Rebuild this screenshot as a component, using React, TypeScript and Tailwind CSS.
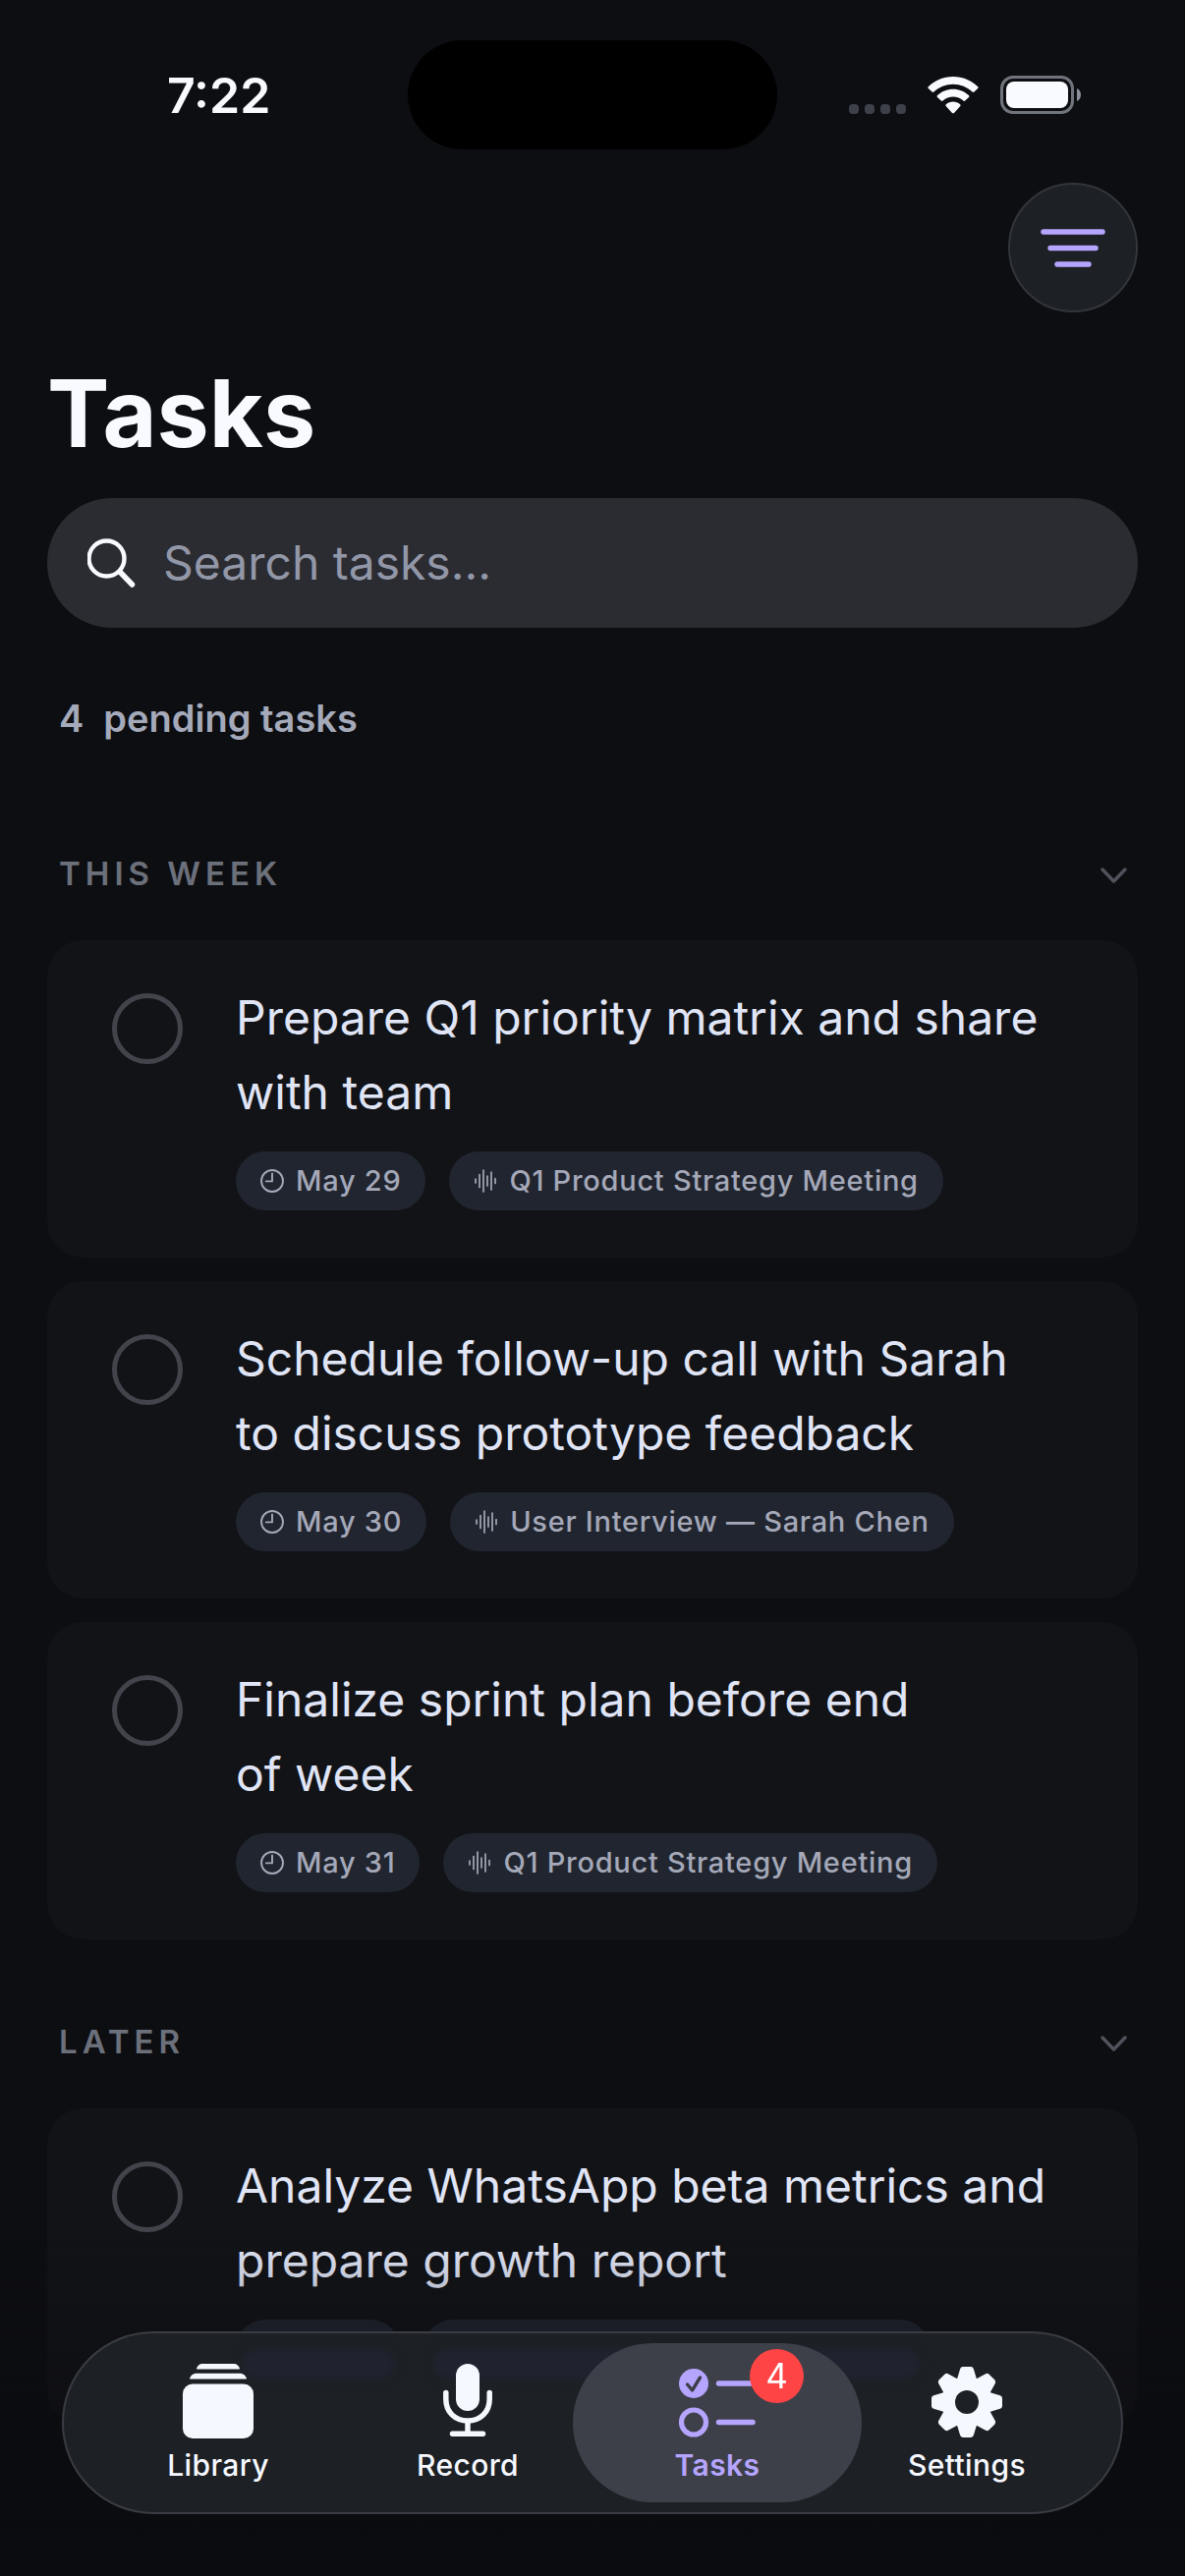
import { useState } from "react";

type Task = {
    id: number;
    title: string;
    due?: string;
    source?: string;
};

type Group = { label: string; tasks: Task[] };

const groups: Group[] = [
    {
        label: "This week",
        tasks: [
            { id: 1, title: "Prepare Q1 priority matrix and share\nwith team", due: "May 29", source: "Q1 Product Strategy Meeting" },
            { id: 2, title: "Schedule follow-up call with Sarah\nto discuss prototype feedback", due: "May 30", source: "User Interview — Sarah Chen" },
            { id: 3, title: "Finalize sprint plan before end\nof week", due: "May 31", source: "Q1 Product Strategy Meeting" },
        ],
    },
    {
        label: "Later",
        tasks: [{ id: 4, title: "Analyze WhatsApp beta metrics and\nprepare growth report" }],
    },
];

const WifiIcon = () => (
    <svg width="52" height="38" viewBox="0 0 52 38" fill="#f9faff">
        <path d="M26 0C35.800 0 44.800 3.800 51.200 10.200C51.800 10.800 51.800 11.500 51.200 12.100L47.400 15.600C46.800 16.200 46.200 16.100 45.600 15.600C40.300 10.500 33.400 7.700 26 7.700C18.600 7.700 11.700 10.500 6.400 15.600C5.800 16.100 5.200 16.200 4.600 15.600L0.800 12.100C0.200 11.500 0.200 10.800 0.800 10.200C7.200 3.800 16.200 0 26 0Z" />
        <path d="M26 12.700C32.100 12.700 37.800 15 42 19C42.600 19.600 42.600 20.300 42 20.900L38.200 24.600C37.700 25.100 37 25.100 36.400 24.600C33.600 22 29.900 20.600 26 20.600C22.100 20.600 18.400 22 15.600 24.600C15 25.100 14.300 25.100 13.800 24.600L10 20.900C9.400 20.300 9.400 19.600 10 19C14.200 15 19.900 12.700 26 12.700Z" />
        <path d="M26 25.600C28.800 25.600 31.200 26.500 33.200 28.200C33.800 28.700 33.800 29.400 33.300 30L27 36.900C26.400 37.500 25.600 37.500 25 36.900L18.700 30C18.200 29.400 18.200 28.700 18.800 28.200C20.800 26.500 23.200 25.600 26 25.600Z" />
    </svg>
);

const BatteryIcon = () => (
    <svg width="82" height="39" viewBox="0 0 82 39">
        <rect x="1.500" y="1.500" width="72" height="36" rx="11.500" fill="none" stroke="#70747d" strokeWidth="3" />
        <rect x="6" y="6" width="63" height="27" rx="8" fill="#f9faff" />
        <path d="M78 13C80.500 14.200 82 16.600 82 19.500S80.500 24.800 78 26Z" fill="#8d919b" />
    </svg>
);

const StatusBar = () => (
    <div className="grid grid-cols-[1fr_376px_1fr] items-center pt-[41px]">
        <span className="pl-[170px] text-[50px] leading-[60px] font-semibold text-[#f9faff]">7:22</span>
        <div className="h-[111px] rounded-full bg-black" />
        <div className="flex items-center justify-end gap-[22px] pr-[106px]">
            <div className="flex gap-[6px] self-end">
                {[0, 1, 2, 3].map((i) => (
                    <span key={i} className="size-[10px] rounded-[4px] bg-[#3f414a]" />
                ))}
            </div>
            <WifiIcon />
            <BatteryIcon />
        </div>
    </div>
);

const ClockIcon = () => (
    <svg width="24" height="24" viewBox="0 0 24 24" fill="none" stroke="currentColor" strokeWidth="1.900" strokeLinecap="round">
        <circle cx="12" cy="12" r="11" />
        <path d="M12 4.500V12.400H5.800" strokeLinejoin="round" />
    </svg>
);

const WaveIcon = () => (
    <svg width="24" height="24" viewBox="0 0 24 24" stroke="currentColor" strokeWidth="1.700" strokeLinecap="round">
        <path d="M2 10V14M6 5.500V18.500M10 1V23M14 7V17M18 3V21M22 9.500V14.500" />
    </svg>
);

const Chip = ({ icon, children }: { icon: React.ReactNode; children: React.ReactNode }) => (
    <span className="flex h-[60px] items-center gap-3 rounded-full bg-[#21252f] px-[25px] text-[29px] font-medium tracking-wide text-[#a4a8b8]">
        {icon}
        {children}
    </span>
);

const TaskCard = ({ task }: { task: Task }) => {
    const [done, setDone] = useState(false);
    return (
        <li className="flex items-start gap-[54px] rounded-[36px] bg-[#121317] pt-[41px] pr-10 pb-12 pl-[66px]">
            <input
                id={`task-${task.id}`}
                type="checkbox"
                checked={done}
                onChange={(e) => setDone(e.target.checked)}
                className="mt-[13px] size-[72px] shrink-0 cursor-pointer appearance-none rounded-full border-[5px] border-[#42444c] checked:bg-[#b5a5ff]"
            />
            <div className="min-w-0">
                <label htmlFor={`task-${task.id}`} className="block whitespace-pre-line text-[48px] leading-[76px] text-[#e0e5f6]">
                    {task.title}
                </label>
                <div className="mt-[22px] flex gap-6">
                    {task.due ? (
                        <Chip icon={<ClockIcon />}>{task.due}</Chip>
                    ) : (
                        <span className="h-[60px] w-[167px] rounded-full bg-[#21252f]" />
                    )}
                    {task.source ? (
                        <Chip icon={<WaveIcon />}>{task.source}</Chip>
                    ) : (
                        <span className="h-[60px] w-[515px] rounded-full bg-[#21252f]" />
                    )}
                </div>
            </div>
        </li>
    );
};

const TaskGroup = ({ group, className }: { group: Group; className: string }) => {
    const [open, setOpen] = useState(true);
    return (
        <section className={className}>
            <h2>
                <button
                    type="button"
                    aria-expanded={open}
                    onClick={() => setOpen(!open)}
                    className="flex w-full items-center justify-between pr-[11px] pl-3 text-[33px] leading-[48px] font-semibold tracking-[5px] text-[#6c707b] uppercase"
                >
                    {group.label}
                    <svg width="27" height="16" viewBox="0 0 27 16" className="mt-1" fill="none" stroke="#50535c" strokeWidth="3.400" strokeLinecap="round" strokeLinejoin="round">
                        <path d="M2 2L13.500 14L25 2" />
                    </svg>
                </button>
            </h2>
            {open && (
                <ul className="mt-11 flex flex-col gap-6">
                    {group.tasks.map((task) => (
                        <TaskCard key={task.id} task={task} />
                    ))}
                </ul>
            )}
        </section>
    );
};

const LibraryIcon = () => (
    <svg width="72" height="76" viewBox="0 0 72 76" fill="currentColor">
        <path d="M14 5.500C14.500 2 17 0 20.500 0H51.500C55 0 57.500 2 58 5.500Z" />
        <path d="M7 15.500C7.500 12 10.500 9.700 14 9.700H58C61.500 9.700 64.500 12 65 15.500Z" />
        <rect y="20.500" width="72" height="55.500" rx="10" />
    </svg>
);

const RecordIcon = () => (
    <svg width="72" height="76" viewBox="0 0 72 76" fill="none" stroke="currentColor" strokeWidth="5.500" strokeLinecap="round">
        <rect x="24" y="0" width="24" height="48" rx="12" fill="currentColor" stroke="none" />
        <path d="M13.800 29.500V36C13.800 49 23 58 36 58S58.200 49 58.200 36V29.500M36 58V71M20.500 71.200H51.500" />
    </svg>
);

const TasksIcon = () => (
    <svg width="78" height="76" viewBox="0 0 78 76" fill="none" stroke="currentColor">
        <circle cx="15" cy="20" r="15" fill="currentColor" stroke="none" />
        <path d="M8.500 21L13.500 27L21.500 14" stroke="#3e4049" strokeWidth="3.400" strokeLinecap="round" strokeLinejoin="round" />
        <path d="M40.500 20H75M40.500 59.500H75" strokeWidth="5.500" strokeLinecap="round" />
        <circle cx="15" cy="59.500" r="12.500" strokeWidth="5.200" />
    </svg>
);

const SettingsIcon = () => (
    <svg width="72" height="76" viewBox="0 0 72 76" fill="currentColor" stroke="currentColor">
        <mask id="gear-hole" maskUnits="userSpaceOnUse" x="-40" y="-40" width="80" height="80">
            <rect x="-40" y="-40" width="80" height="80" fill="white" stroke="none" />
            <circle r="12" fill="black" stroke="none" />
        </mask>
        <g transform="translate(36 39)" mask="url(#gear-hole)">
            {[0, 45, 90, 135].map((a) => (
                <path key={a} transform={`rotate(${a})`} d="M-4 -33H4L7 -23V23L4 33H-4L-7 23V-23Z" strokeWidth="6" strokeLinejoin="round" />
            ))}
            <circle r="26" stroke="none" />
        </g>
    </svg>
);

const tabs = [
    { name: "Library", icon: <LibraryIcon /> },
    { name: "Record", icon: <RecordIcon /> },
    { name: "Tasks", icon: <TasksIcon />, badge: 4 },
    { name: "Settings", icon: <SettingsIcon /> },
];

const TabBar = ({ current }: { current: string }) => (
    <nav className="fixed inset-x-[63px] bottom-[63px] rounded-full border-2 border-[#3a3c44] bg-[#1d2024] px-[30px] py-[10px]">
        {/* content glow seen through the glass */}
        <div className="absolute top-4 left-[182px] h-[30px] w-[155px] rounded-full bg-[#20232f] blur-xs" />
        <div className="absolute top-4 left-[376px] h-[30px] w-[495px] rounded-full bg-[#20232f] blur-xs" />
        <div className="relative grid grid-cols-4">
            {tabs.map((tab) => (
                <button
                    key={tab.name}
                    type="button"
                    aria-current={tab.name === current ? "page" : undefined}
                    className={
                        tab.name === current
                            ? "relative -mx-5 flex h-[162px] flex-col items-center rounded-full bg-[#3e4049] pt-[21px] font-semibold tracking-wide text-[#b5a5ff]"
                            : "relative flex h-[162px] flex-col items-center pt-[21px] font-medium tracking-wide text-[#f6f8ff]"
                    }
                >
                    {tab.icon}
                    <span className="mt-[6px] text-[30px] leading-[42px]">{tab.name}</span>
                    {tab.badge && (
                        <span className="absolute top-[6px] left-[180px] flex size-[55px] items-center justify-center rounded-full bg-[#ff4446] text-[35px] font-normal tracking-normal text-white">
                            {tab.badge}
                        </span>
                    )}
                </button>
            ))}
        </div>
    </nav>
);

export default function App() {
    const [query, setQuery] = useState("");
    const pending = groups.reduce((sum, g) => sum + g.tasks.length, 0);

    return (
        <div className="min-h-screen bg-[#0d0e12] font-[Inter,'Liberation_Sans',sans-serif]">
            <StatusBar />
            <main className="px-12 pb-[140px]">
                <div className="flex justify-end pt-[34px]">
                    <button
                        type="button"
                        aria-label="Filter tasks"
                        className="flex size-[132px] items-center justify-center rounded-full border-2 border-[#33353c] bg-[#1d2024]"
                    >
                        <svg width="66" height="40" viewBox="0 0 66 40" stroke="#b5a5ff" strokeWidth="5.500" strokeLinecap="round">
                            <path d="M3 4H63M10 20.500H56M17 37H49" />
                        </svg>
                    </button>
                </div>

                <h1 className="mt-[43px] text-[95px] leading-[120px] font-bold text-[#f9faff]">Tasks</h1>

                <label className="mt-[26px] flex h-[132px] items-center gap-[26px] rounded-full bg-[#2b2c31] px-[41px]">
                    <svg width="51" height="51" viewBox="0 0 51 51" className="shrink-0" fill="none" stroke="#f9faff" strokeLinecap="round">
                        <circle cx="19.500" cy="20.500" r="18" strokeWidth="4.400" />
                        <path d="M33 34L45.500 47" strokeWidth="5.500" />
                    </svg>
                    <input
                        type="text"
                        aria-label="Search tasks"
                        placeholder="Search tasks..."
                        value={query}
                        onChange={(e) => setQuery(e.target.value)}
                        className="min-w-0 flex-1 bg-transparent text-[48px] leading-[64px] text-[#e0e5f6] outline-none placeholder:text-[#9297a8]"
                    />
                </label>

                <p className="mt-[68px] flex gap-5 pl-3 text-[38px] leading-[48px] font-semibold text-[#a5aaba]">
                    <span>{pending}</span>
                    <span>pending tasks</span>
                </p>

                <TaskGroup group={groups[0]} className="mt-[110px]" />
                <TaskGroup group={groups[1]} className="mt-20" />
            </main>

            <div className="pointer-events-none fixed inset-x-0 bottom-0 h-[342px] bg-linear-to-b from-transparent to-[#0b0c10] to-90%" />
            <TabBar current="Tasks" />
        </div>
    );
}
